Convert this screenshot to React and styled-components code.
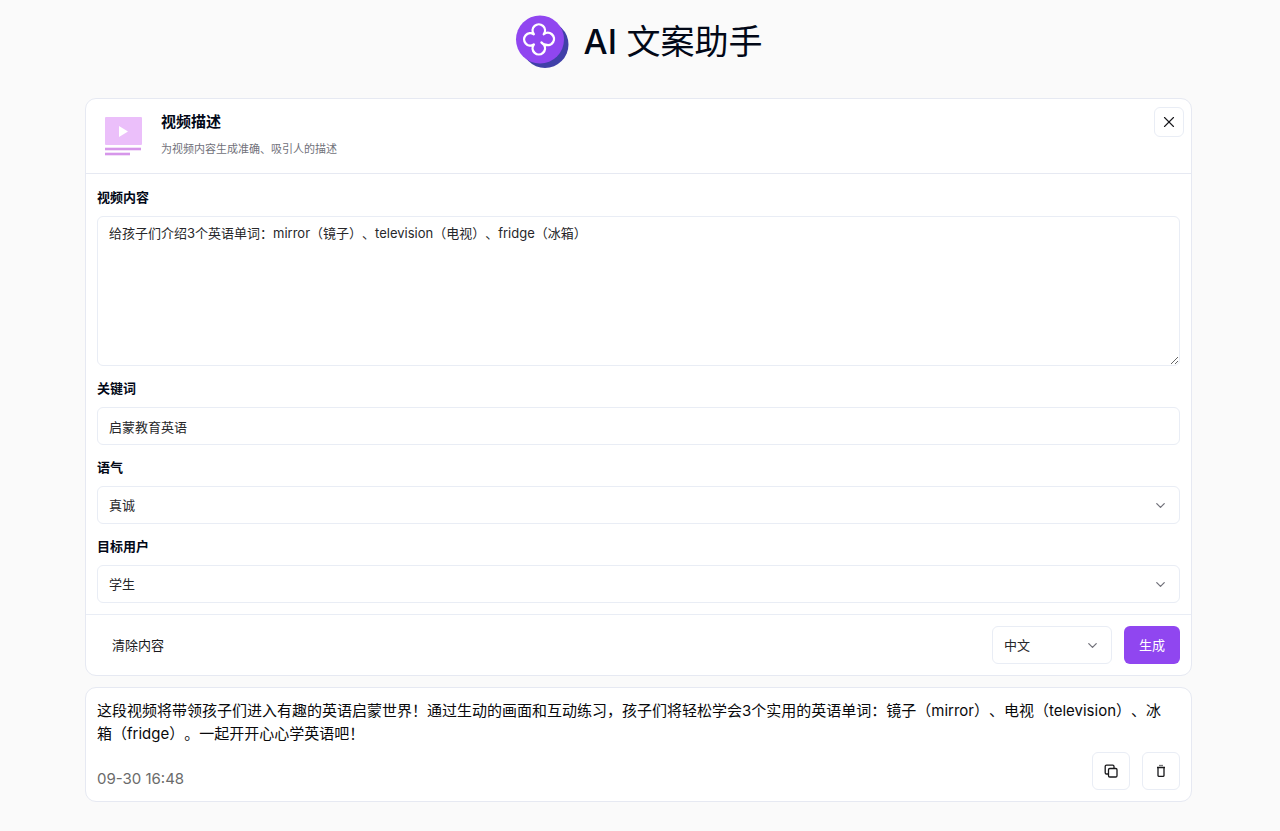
import React, { useState } from 'react'
import styled, { createGlobalStyle } from 'styled-components';
import { ChevronDown, X } from 'lucide-react';

const TONES = ['真诚', '专业', '幽默'];
const AUDIENCES = ['学生', '家长', '老师'];
const LANGUAGES = ['中文', '英文'];

const DEFAULT_FORM = {
    content: '给孩子们介绍3个英语单词：mirror（镜子）、television（电视）、fridge（冰箱）',
    keywords: '启蒙教育英语',
    tone: '真诚',
    audience: '学生',
    language: '中文',
};

const RESULTS = [
    {
        id: 1,
        text: '这段视频将带领孩子们进入有趣的英语启蒙世界！通过生动的画面和互动练习，孩子们将轻松学会3个实用的英语单词：镜子（mirror）、电视（television）、冰箱（fridge）。一起开开心心学英语吧！',
        time: '09-30 16:48',
    },
];

const GlobalStyle = createGlobalStyle`
    * {
        box-sizing: border-box;
    }

    body {
        margin: 0;
        background: #fafafa;
        color: #020817;
        font-family: Inter, 'Noto Sans CJK SC', sans-serif;
        font-size: 13px;
        text-spacing-trim: space-all;
    }

    button, input, textarea, select {
        font: inherit;
        color: inherit;
        text-spacing-trim: inherit;
    }
`;

const Page = styled.main`
    display: flex;
    flex-direction: column;
    gap: 11px;
    padding: 15px 88px 29px 85px;

    @media( max-width: 767px ) {
        padding: 15px 16px 29px;
    }
`;

const Brand = styled.header`
    display: flex;
    align-items: center;
    justify-content: center;
    gap: 15px;
    margin-bottom: 18px;

    h1 {
        margin: 0;
        font-size: 34px;
        line-height: 54px;
        font-weight: 400;
    }

    span {
        font-weight: 500;
    }
`;

const Card = styled.section`
    background: #fff;
    border: 1px solid #e6e9f2;
    border-radius: 11px;
`;

const CardHeader = styled.div`
    display: flex;
    align-items: flex-start;
    gap: 18px;
    padding: 8px 7px 8px 19px;
    border-bottom: 1px solid #e6e9f2;
`;

const Heading = styled.div`
    flex: 1;

    h2 {
        margin: 3px 0 5px;
        font-size: 15px;
        line-height: 24px;
        font-weight: 700;
    }

    p {
        margin: 0 0 6px;
        font-size: 11px;
        line-height: 20px;
        color: #71717a;
    }
`;

const HeaderIcon = styled.div`
    display: flex;
    padding-top: 10px;
`;

const Form = styled.div`
    display: flex;
    flex-direction: column;
    gap: 12px;
    padding: 13px 11px 11px;
`;

const Field = styled.div`
    display: flex;
    flex-direction: column;
    gap: 9px;

    label {
        line-height: 20px;
        font-weight: 700;
    }
`;

const TextArea = styled.textarea`
    display: block;
    width: 100%;
    height: 150px;
    padding: 6px 11px;
    line-height: 20px;
    color: #27272a;
    background: #fff;
    border: 1px solid #e9edf5;
    border-radius: 6px;
    resize: vertical;
`;

const TextInput = styled.input`
    width: 100%;
    height: 38px;
    padding: 0 11px;
    color: #27272a;
    background: #fff;
    border: 1px solid #e9edf5;
    border-radius: 6px;
`;

const SelectBox = styled.div`
    display: grid;
    align-items: center;
    width: ${({ $width }) => $width || '100%'};

    select, svg {
        grid-area: 1 / 1;
    }

    select {
        appearance: none;
        width: 100%;
        height: 38px;
        padding: 0 32px 0 11px;
        color: #27272a;
        background: #fff;
        border: 1px solid #e9edf5;
        border-radius: 6px;
    }

    svg {
        justify-self: end;
        margin-right: 12px;
        color: #71717a;
        pointer-events: none;
    }
`;

const CardFooter = styled.div`
    display: flex;
    align-items: center;
    gap: 12px;
    padding: 11px;
    border-top: 1px solid #e9edf5;
`;

const Button = styled.button`
    height: 38px;
    padding: 0 15px 2px;
    border: 0;
    border-radius: 6px;
    cursor: pointer;
    color: ${({ $primary }) => $primary ? '#fff' : '#18181b'};
    background: ${({ $primary }) => $primary ? '#9046f0' : 'transparent'};
    margin-right: ${({ $primary }) => $primary ? '0' : 'auto'};
`;

const IconButton = styled.button`
    display: flex;
    align-items: center;
    justify-content: center;
    width: ${({ $size }) => $size}px;
    height: ${({ $size }) => $size}px;
    padding: 0;
    color: #18181b;
    background: #fff;
    border: 1px solid #e9edf5;
    border-radius: 6px;
    cursor: pointer;
`;

const ResultCard = styled(Card)`
    padding: 11px;

    p {
        margin: 0 11px 7px 0;
        font-size: 15px;
        line-height: 23px;
        color: #09090b;
    }
`;

const ResultFooter = styled.div`
    display: flex;
    align-items: flex-end;
    gap: 12px;

    time {
        flex: 1;
        font-size: 15px;
        line-height: 23px;
        color: #6b6b6b;
    }
`;

const Logo = () => (
    <svg width='54' height='54' viewBox='0 0 54 54' fill='none' aria-hidden='true'>
        <circle cx='30' cy='29.5' r='23.5' fill='#4040a8' />
        <circle cx='25' cy='24.5' r='24' fill='#9046f0' />
        <path
            d='M28.800 29.500A6.200 6.200 0 1 1 18.800 29.500A6.200 6.200 0 1 1 18.800 19.200A6.200 6.200 0 1 1 28.800 19.200A6.200 6.200 0 1 1 30.500 29.700Q28 29.500 26.500 27.500'
            stroke='#fff'
            strokeWidth='2.4'
            strokeLinecap='round'
            strokeLinejoin='round'
        />
    </svg>
);

const VideoIcon = () => (
    <svg width='38' height='40' viewBox='0 0 38 40' aria-hidden='true'>
        <rect width='37' height='28' rx='1' fill='#ebbffa' />
        <path d='M14 9L23 14.500L14 20Z' fill='#fff' />
        <rect y='30.700' width='36' height='2.600' fill='#d696ea' />
        <rect y='35.700' width='25' height='2.600' fill='#d696ea' />
    </svg>
);

const CopyIcon = () => (
    <svg width='14' height='14' viewBox='0 0 14 14' fill='none' stroke='currentColor' strokeWidth='1.3' aria-hidden='true'>
        <rect x='4.500' y='4.500' width='8.500' height='8.500' rx='1.300' />
        <path d='M4.500 10H2.500A1.300 1.300 0 0 1 1.200 8.700V2.500A1.300 1.300 0 0 1 2.500 1.200H8.700A1.300 1.300 0 0 1 10 2.500V4.500' />
    </svg>
);

const TrashIcon = () => (
    <svg width='14' height='14' viewBox='0 0 14 14' fill='none' stroke='currentColor' strokeWidth='1.3' aria-hidden='true'>
        <path d='M5 1.500H9' strokeOpacity='0.6' />
        <path d='M3 3.500H11M4 3.500V11.500A1 1 0 0 0 5 12.300H9A1 1 0 0 0 10 11.500V3.500' />
    </svg>
);

const Select = ({ options, width, ...props }) => (
    <SelectBox $width={width}>
        <select {...props}>
            {options.map( option => <option key={option}>{option}</option> )}
        </select>
        <ChevronDown size={15} strokeWidth={2} />
    </SelectBox>
);

const App = () => {
    const [form, setForm] = useState(DEFAULT_FORM);
    const [results, setResults] = useState(RESULTS);

    const handleChange = ({ target: { name, value } }) => setForm({ ...form, [name]: value });
    const clear = () => setForm({ ...form, content: '', keywords: '' });
    const remove = id => setResults(results.filter( item => item.id !== id ));

    return (
        <Page>
            <GlobalStyle />
            <Brand>
                <Logo />
                <h1><span>AI</span> 文案助手</h1>
            </Brand>

            <Card>
                <CardHeader>
                    <HeaderIcon><VideoIcon /></HeaderIcon>
                    <Heading>
                        <h2>视频描述</h2>
                        <p>为视频内容生成准确、吸引人的描述</p>
                    </Heading>
                    <IconButton $size={30} aria-label='关闭'>
                        <X size={18} strokeWidth={1.5} />
                    </IconButton>
                </CardHeader>
                <Form>
                    <Field>
                        <label htmlFor='content'>视频内容</label>
                        <TextArea id='content' name='content' value={form.content} onChange={handleChange} />
                    </Field>
                    <Field>
                        <label htmlFor='keywords'>关键词</label>
                        <TextInput id='keywords' name='keywords' value={form.keywords} onChange={handleChange} />
                    </Field>
                    <Field>
                        <label htmlFor='tone'>语气</label>
                        <Select id='tone' name='tone' options={TONES} value={form.tone} onChange={handleChange} />
                    </Field>
                    <Field>
                        <label htmlFor='audience'>目标用户</label>
                        <Select id='audience' name='audience' options={AUDIENCES} value={form.audience} onChange={handleChange} />
                    </Field>
                </Form>
                <CardFooter>
                    <Button onClick={clear}>清除内容</Button>
                    <Select
                        name='language'
                        aria-label='语言'
                        width='120px'
                        options={LANGUAGES}
                        value={form.language}
                        onChange={handleChange}
                    />
                    <Button $primary>生成</Button>
                </CardFooter>
            </Card>

            {
                results.map( ({ id, text, time }) => (
                    <ResultCard key={id}>
                        <p>{text}</p>
                        <ResultFooter>
                            <time>{time}</time>
                            <IconButton $size={38} aria-label='复制' onClick={() => navigator.clipboard.writeText(text)}>
                                <CopyIcon />
                            </IconButton>
                            <IconButton $size={38} aria-label='删除' onClick={() => remove(id)}>
                                <TrashIcon />
                            </IconButton>
                        </ResultFooter>
                    </ResultCard>
                ) )
            }
        </Page>
    )
}

export default App;
